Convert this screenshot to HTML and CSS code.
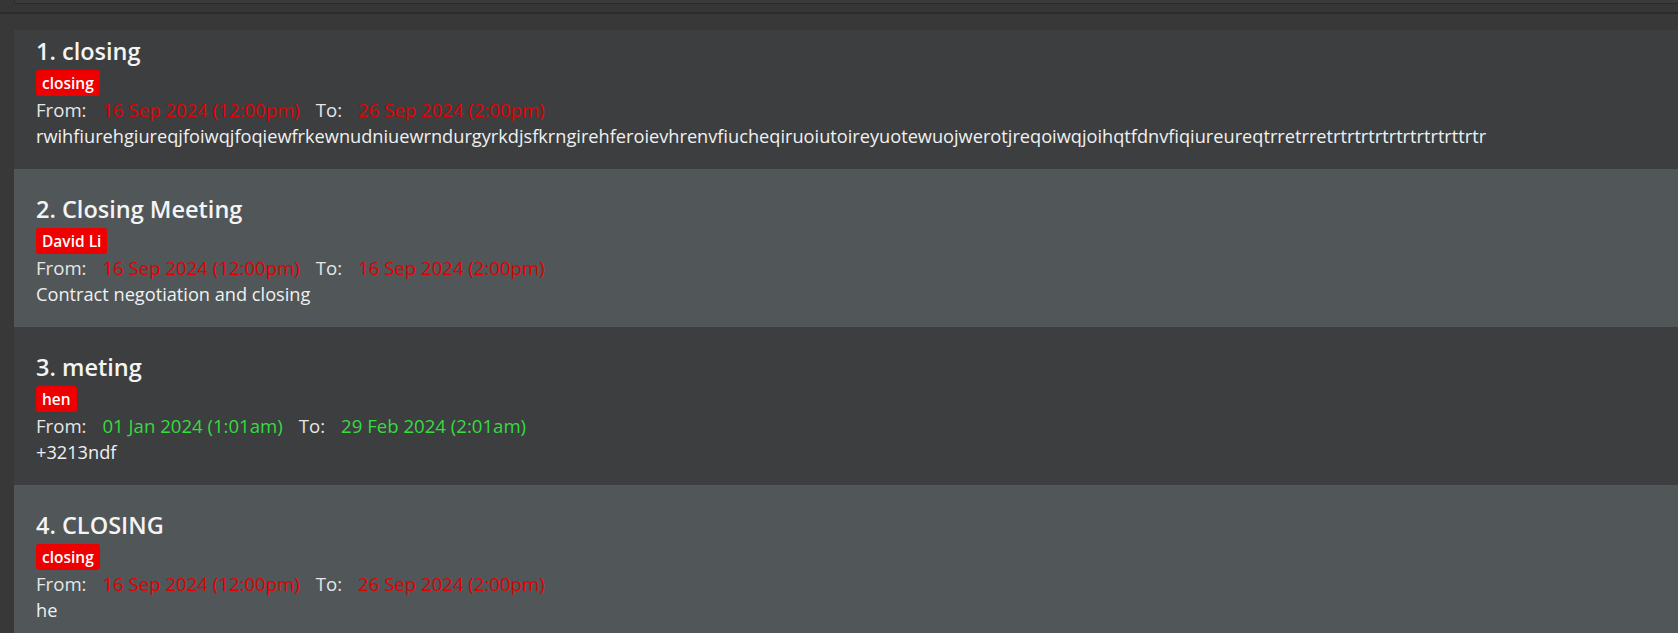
FILE: index.html
```html
<!DOCTYPE html>
<html lang="en">
<head>
<meta charset="utf-8">
<title>Meetings</title>
<link rel="stylesheet" href="styles.css">
</head>
<body>
<div class="app">
  <div class="top-pane"><div class="top-box"></div></div>
  <div class="divider"></div>
  <div class="list-pane">
    <div class="list-viewport">
      <div class="list">
        <div class="cell even">
          <div class="title">1. closing</div>
          <div class="tags"><span class="tag">closing</span></div>
          <div class="times"><span>From:</span><span class="date red">16 Sep 2024 (12:00pm)</span><span>To:</span><span class="date red">26 Sep 2024 (2:00pm)</span></div>
          <div class="desc">rwihfiurehgiureqjfoiwqjfoqiewfrkewnudniuewrndurgyrkdjsfkrngirehferoievhrenvfiucheqiruoiutoireyuotewuojwerotjreqoiwqjoihqtfdnvfiqiureureqtrretrretrtrtrtrtrtrtrtrtrttrtr</div>
        </div>
        <div class="cell odd">
          <div class="title">2. Closing Meeting</div>
          <div class="tags"><span class="tag">David Li</span></div>
          <div class="times"><span>From:</span><span class="date red">16 Sep 2024 (12:00pm)</span><span>To:</span><span class="date red">16 Sep 2024 (2:00pm)</span></div>
          <div class="desc">Contract negotiation and closing</div>
        </div>
        <div class="cell even">
          <div class="title">3. meting</div>
          <div class="tags"><span class="tag">hen</span></div>
          <div class="times"><span>From:</span><span class="date green">01 Jan 2024 (1:01am)</span><span>To:</span><span class="date green">29 Feb 2024 (2:01am)</span></div>
          <div class="desc">+3213ndf</div>
        </div>
        <div class="cell odd">
          <div class="title">4. CLOSING</div>
          <div class="tags"><span class="tag">closing</span></div>
          <div class="times"><span>From:</span><span class="date red">16 Sep 2024 (12:00pm)</span><span>To:</span><span class="date red">26 Sep 2024 (2:00pm)</span></div>
          <div class="desc">he</div>
        </div>
      </div>
    </div>
  </div>
</div>
</body>
</html>
```

FILE: styles.css
```css
html, body {
  margin: 0;
  padding: 0;
  background: #383838;
  overflow: hidden;
}

.app {
  width: 1678px;
  height: 633px;
  display: flex;
  flex-direction: column;
  font-family: "Open Sans", "Noto Sans", sans-serif;
  color: #ffffff;
}

.top-pane {
  height: 12px;
  background: #363636;
  flex: none;
}

.top-box {
  margin-left: 14px;
  height: 3px;
  background: #3b3b3b;
  border-left: 1px solid #2c2c2c;
  border-bottom: 1px solid #2a2a2a;
}

.divider {
  height: 2px;
  background: #2b2b2b;
  flex: none;
}

.list-pane {
  flex: 1;
  padding-top: 16px;
  padding-left: 14px;
  min-height: 0;
  display: flex;
}

.list-viewport {
  flex: 1;
  overflow: hidden;
}

.list {
  margin-top: -19px;
}

.cell {
  height: 158px;
  box-sizing: border-box;
  padding: 27px 0 0 22px;
}

.cell.even { background: #3c3e3f; }
.cell.odd { background: #515658; }

.title {
  font-size: 23.5px;
  font-weight: 600;
  line-height: 27px;
  color: #f4f4f4;
  white-space: nowrap;
}

.tags {
  display: flex;
  margin-top: 5px;
}

.tag {
  background: #ee0000;
  color: #ffffff;
  font-size: 15.5px;
  font-weight: 600;
  line-height: 18px;
  padding: 4px 6px 4px 6px;
  border-radius: 3px;
}

.times {
  display: flex;
  gap: 16px;
  margin-top: 1px;
  font-size: 18.6px;
  line-height: 26px;
  color: #e6e6e6;
  white-space: nowrap;
}

.date.red { color: #e20000; }
.date.green { color: #35db3f; }

.desc {
  font-size: 18.2px;
  line-height: 26px;
  color: #f0f0f0;
  white-space: nowrap;
}
```
